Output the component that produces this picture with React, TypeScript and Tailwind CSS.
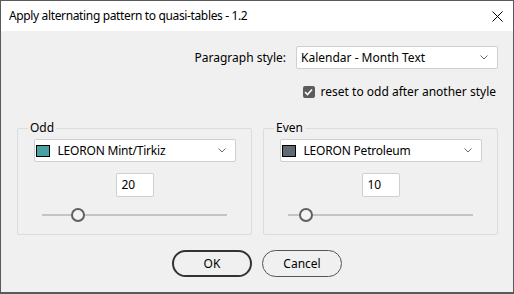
import React from "react";

const font = { fontFamily: '"Noto Sans", "Open Sans", sans-serif' };

function Chevron() {
  return (
    <svg width="8" height="5" viewBox="0 0 8 5" className="shrink-0">
      <path d="M0.5 0.5 L4 4 L7.5 0.5" fill="none" stroke="#6b6b6b" strokeWidth="1" />
    </svg>
  );
}

function Slider({ pos }: { pos: number }) {
  return (
    <div className="relative h-[14px] mx-[24px] flex items-center">
      <div className="h-[2px] w-full bg-[#c4c4c4]" />
      <div
        className="absolute top-0 w-[14px] h-[14px] rounded-full border-2 border-[#606060] bg-[#f3f3f3]"
        style={{ left: pos - 7 }}
      />
    </div>
  );
}

function Group({
  label,
  color,
  name,
  value,
  pos,
}: {
  label: string;
  color: string;
  name: string;
  value: string;
  pos: number;
}) {
  return (
    <div className="relative w-[235px] h-[107px] border border-[#dcdcdc] rounded-[2px] flex flex-col items-center">
      <span className="absolute -top-[9px] left-[10px] px-[2px] bg-[#f0f0f0] leading-[16px] text-[12px] text-black">
        {label}
      </span>
      <div className="mt-[10px] w-[202px] h-[23px] bg-white border border-[#cfcfcf] rounded-[2px] flex items-center pl-[1px] pr-[9px]">
        <div className="w-[14px] h-[12px] border border-black" style={{ backgroundColor: color }} />
        <span className="ml-[8px] text-[12px] tracking-[-0.2px] text-black flex-1 leading-[16px]">{name}</span>
        <Chevron />
      </div>
      <div className="mt-[11px] w-[38px] h-[24px] bg-white border border-[#cfcfcf] rounded-[2px] flex items-center pl-[5px] text-[12px] text-black">
        {value}
      </div>
      <div className="mt-[11px] w-full">
        <Slider pos={pos} />
      </div>
    </div>
  );
}

export default function App() {
  return (
    <div
      className="w-[514px] h-[294px] border-x border-t border-b-2 border-[#5a5a5a] flex flex-col overflow-hidden"
      style={font}
    >
      <div className="h-[30px] bg-white flex items-center justify-between pl-[8px] pr-[10px] shrink-0">
        <span className="text-[12px] tracking-[-0.36px] text-black leading-[16px]">
          Apply alternating pattern to quasi-tables - 1.2
        </span>
        <svg width="11" height="11" viewBox="0 0 11 11">
          <path d="M0.5 0.5 L10.5 10.5 M10.5 0.5 L0.5 10.5" stroke="#000" strokeWidth="1" />
        </svg>
      </div>
      <div className="flex-1 bg-[#f0f0f0] flex flex-col">
        <div className="mt-[15px] flex items-center justify-end pr-[15px]">
          <span className="text-[12px] text-black mr-[10px]">Paragraph style:</span>
          <div className="w-[202px] h-[23px] bg-white border border-[#cfcfcf] rounded-[2px] flex items-center pl-[4px] pr-[9px]">
            <span className="flex-1 text-[12px] text-black">Kalendar - Month Text</span>
            <Chevron />
          </div>
        </div>
        <div className="mt-[14px] h-[18px] flex items-center justify-end pr-[17px]">
          <div className="w-[12px] h-[12px] rounded-[2px] bg-[#5c5c5c] flex items-center justify-center">
            <svg width="9" height="8" viewBox="0 0 9 8">
              <path d="M1 4 L3.5 6.5 L8 1.5" fill="none" stroke="#fff" strokeWidth="1.6" />
            </svg>
          </div>
          <span className="ml-[6px] text-[12px] leading-[18px] text-black">reset to odd after another style</span>
        </div>
        <div className="mt-[27px] flex gap-[11px] pl-[16px]">
          <Group label="Odd" color="#4aa0a2" name="LEORON Mint/Tirkiz" value="20" pos={36} />
          <Group label="Even" color="#5f6a72" name="LEORON Petroleum" value="10" pos={18} />
        </div>
        <div className="mt-[15px] flex justify-center gap-[10px]">
          <button className="w-[80px] h-[27px] rounded-full border-2 border-[#333333] bg-[#f0f0f0] text-[12px] text-black">
            OK
          </button>
          <button className="w-[80px] h-[27px] rounded-full border border-[#555555] bg-[#f0f0f0] text-[12px] text-black">
            Cancel
          </button>
        </div>
      </div>
    </div>
  );
}
